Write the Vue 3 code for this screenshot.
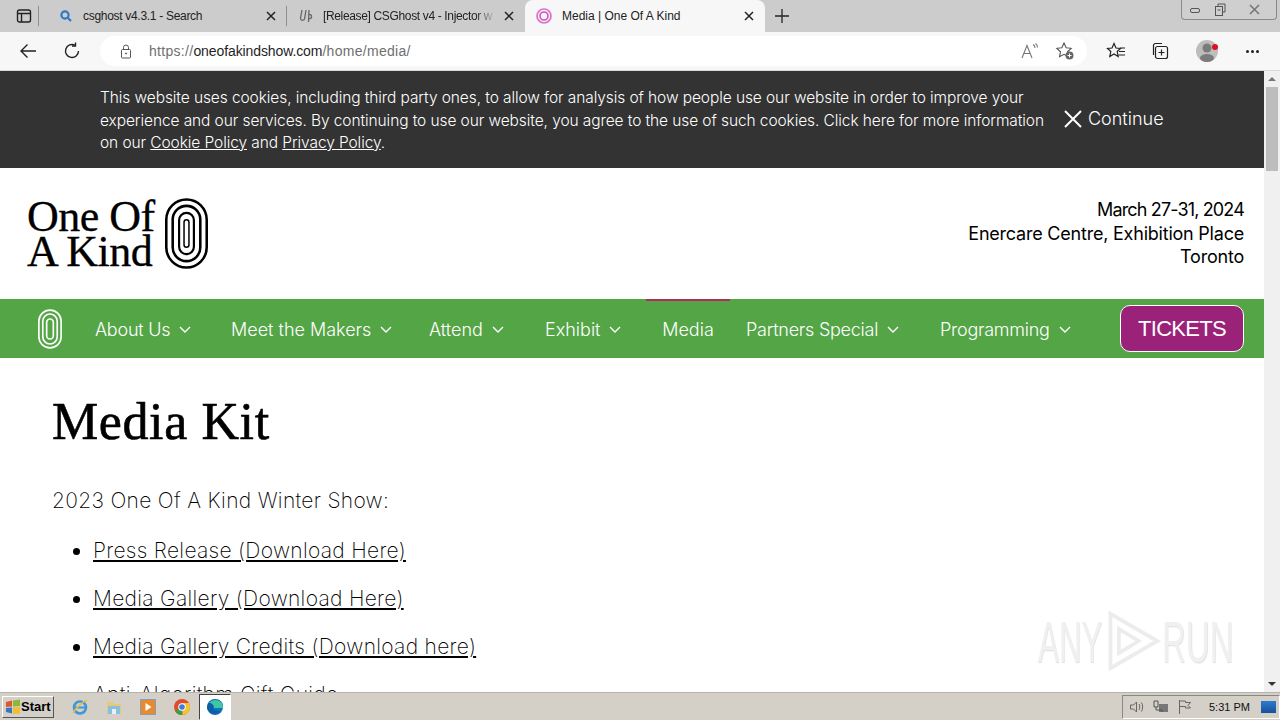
<script setup>
const tabs = [
  { id: 's', title: 'csghost v4.3.1 - Search', icon: 'search' },
  { id: 'r', title: '[Release] CSGhost v4 - Injector w', icon: 'uc' },
  { id: 'm', title: 'Media | One Of A Kind', icon: 'ring', active: true }
]
const nav = [
  { t: 'About Us', c: true, w: 136, tight: true },
  { t: 'Meet the Makers', c: true, w: 198 },
  { t: 'Attend', c: true, w: 116 },
  { t: 'Exhibit', c: true, w: 117 },
  { t: 'Media', c: false, w: 84, active: true },
  { t: 'Partners Special', c: true, w: 194, tight: true },
  { t: 'Programming', c: true, w: 161, tight: true }
]
const links = ['Press Release (Download Here)', 'Media Gallery (Download Here)', 'Media Gallery Credits (Download here)', 'Anti-Algorithm Gift Guide']
</script>

<template>
  <div class="screen">
    <div class="tabstrip">
      <div class="winbtn">
        <svg width="16" height="16" viewBox="0 0 16 16" fill="none" stroke="#222" stroke-width="1.4"><rect x="1.5" y="2" width="13" height="12" rx="2"/><path d="M1.5 5.5h13M5.5 5.5V14" /></svg>
      </div>
      <div class="sep first"></div>
      <div v-for="t in tabs" :key="t.id" class="tab" :class="{ active: t.active, ['tab-' + t.id]: true }">
        <svg v-if="t.icon === 'search'" class="favicon" width="16" height="16" viewBox="0 0 16 16" fill="none"><circle cx="7" cy="7" r="3.6" stroke="#2f78c4" stroke-width="2.2"/><path d="M10 10l3 3" stroke="#2f78c4" stroke-width="2.2"/></svg>
        <svg v-else-if="t.icon === 'uc'" class="favicon" width="16" height="16" viewBox="0 0 16 16" fill="none" stroke="#666" stroke-width="1.3"><path d="M4 2L2.500 10c0 3 3 3 4 1L8 2M11 2l-.5 12M10.500 7c2-1 3.500 0 3 2s-2 2-3 1"/></svg>
        <svg v-else class="favicon" width="18" height="18" viewBox="0 0 18 18" fill="none"><circle cx="9" cy="9" r="7" stroke="#df6fd0" stroke-width="1.700"/><circle cx="9" cy="9" r="4" stroke="#d44fc0" stroke-width="1.600"/></svg>
        <span class="tabtitle">{{ t.title }}</span>
        <svg class="tabx" width="10" height="10" viewBox="0 0 10 10" stroke="#222" stroke-width="1.500"><path d="M1 1l8 8M9 1l-8 8"/></svg>
        <div v-if="t.id === 's'" class="sep"></div>
      </div>
      <svg class="plus" width="16" height="16" viewBox="0 0 16 16" stroke="#222" stroke-width="1.300"><path d="M8 1v14M1 8h14"/></svg>
      <div class="grow"></div>
      <div class="wincontrols">
        <div class="wc"><svg width="12" height="8" viewBox="0 0 12 8" fill="none" stroke="#555"><rect x="1.500" y="2.500" width="9" height="4" rx="1.500"/></svg></div>
        <div class="wc"><svg width="12" height="13" viewBox="0 0 12 13" fill="none" stroke="#555"><rect x="1.500" y="3.500" width="7" height="9"/><path d="M4 3V1h7v8H9"/><path d="M3.500 7h3"/></svg></div>
        <div class="wc wide"><svg width="13" height="11" viewBox="0 0 13 11" stroke="#777" stroke-width="1.600"><path d="M2 1l9 9M11 1l-9 9"/></svg></div>
      </div>
    </div>

    <div class="toolbar">
      <svg class="back" width="18" height="16" viewBox="0 0 18 16" fill="none" stroke="#222" stroke-width="1.400"><path d="M17 8H2M8.500 1.500L2 8l6.500 6.500"/></svg>
      <svg class="reload" width="18" height="18" viewBox="0 0 18 18" fill="none" stroke="#222" stroke-width="1.400"><path d="M15.500 9A6.500 6.500 0 1 1 12 3.200"/><path d="M12.500 .5V4H9"/></svg>
      <div class="omnibox">
        <svg class="lock" width="12" height="15" viewBox="0 0 12 15" fill="none" stroke="#555"><rect x="1.500" y="5.500" width="9" height="8.500" rx="1"/><path d="M3.500 5.500V3.500a2.500 2.500 0 0 1 5 0v2"/><circle cx="6" cy="9.500" r=".6" fill="#555"/></svg>
        <div class="url"><span class="dim">https://</span><span class="host">oneofakindshow.com</span><span class="dim">/home/media/</span></div>
        <div class="grow"></div>
        <svg class="omni-a" width="18" height="16" viewBox="0 0 18 16" fill="none" stroke="#777" stroke-width="1.100"><path d="M1 15L6 2.500 11 15M3 10.500h6"/><path d="M12 1.500c1.500.8 2 2 2 3.500M14.500.5c1.500 1.200 2 2.500 2 4"/></svg>
        <svg class="omni-fav" width="20" height="20" viewBox="0 0 20 20" fill="none"><path d="M9 2l2.200 4.700 5 .6-3.700 3.500 1 5L9 13.300l-4.500 2.500 1-5L1.800 7.300l5-.6z" stroke="#555" stroke-width="1.100"/><circle cx="14.500" cy="14.500" r="4" fill="#666"/><path d="M14.500 12.500v4M12.500 14.500h4" stroke="#fff"/></svg>
      </div>
      <svg class="tb-fav" width="20" height="18" viewBox="0 0 20 18" fill="none" stroke="#222" stroke-width="1.200"><path d="M8 1.500l2 4.500 4.500.5-3.300 3 1 5L8 12l-4.200 2.500 1-5-3.300-3L6 6z"/><path d="M14 6h5M13 9.500h6M12.500 13H19"/></svg>
      <svg class="tb-col" width="18" height="18" viewBox="0 0 18 18" fill="none" stroke="#222" stroke-width="1.200"><rect x="4.500" y="4.500" width="12" height="12" rx="2"/><path d="M2.500 13V3.500a2 2 0 0 1 2-2H11M10.500 7.500v6M7.500 10.500h6"/></svg>
      <div class="avatar">
        <svg width="24" height="24" viewBox="0 0 24 24"><circle cx="11" cy="12" r="11" fill="#bdbdbd"/><circle cx="11" cy="9" r="4.500" fill="#7b7b7b"/><ellipse cx="11" cy="19" rx="7" ry="4" fill="#7b7b7b"/><circle cx="19" cy="8" r="3" fill="#e01020"/></svg>
      </div>
      <div class="dots"><i></i><i></i><i></i></div>
    </div>

    <div class="viewport">
      <div class="page">
        <div class="cookie">
          <p class="cookietext">This website uses cookies, including third party ones, to allow for analysis of how people use our website in order to improve your experience and our services. By continuing to use our website, you agree to the use of such cookies. Click here for more information on our <u>Cookie Policy</u> and <u>Privacy Policy</u>.</p>
          <div class="continue">
            <svg width="20" height="20" viewBox="0 0 20 20" stroke="#fff" stroke-width="2"><path d="M2 2l16 16M18 2L2 18"/></svg>
            <span>Continue</span>
          </div>
        </div>

        <header class="brand">
          <div class="logo">
            <div class="logotext">One Of<br />A Kind</div>
            <svg width="45" height="71" viewBox="0 0 44 72" fill="none" stroke="#000"><rect x="1.500" y="1.500" width="41" height="69" rx="20.500" stroke-width="2.600"/><rect x="8" y="8" width="28" height="56" rx="14" stroke-width="2.600"/><rect x="14.500" y="15" width="15" height="42" rx="7.500" stroke-width="2.200"/><rect x="19.500" y="22" width="5" height="28" rx="2.500" stroke-width="1.500"/></svg>
          </div>
          <div class="eventinfo"><span class="date">March 27-31, 2024</span><br />Enercare Centre, Exhibition Place<br />Toronto</div>
        </header>

        <nav class="nav">
          <svg class="navlogo" width="26" height="40" viewBox="0 0 44 72" fill="none" stroke="#fff"><rect x="2" y="2" width="40" height="68" rx="20" stroke-width="3"/><rect x="9" y="9" width="26" height="54" rx="13" stroke-width="3"/><rect x="16" y="18" width="12" height="36" rx="6" stroke-width="3"/></svg>
          <div v-for="n in nav" :key="n.t" class="navitem" :class="{ active: n.active, tight: n.tight }" :style="{ width: n.w + 'px' }">
            <span>{{ n.t }}</span>
            <svg v-if="n.c" width="12" height="8" viewBox="0 0 12 8" fill="none" stroke="#fff" stroke-width="1.400"><path d="M1 1l5 5 5-5"/></svg>
          </div>
          <div class="grow"></div>
          <div class="tickets">TICKETS</div>
        </nav>

        <main class="content">
          <h1>Media Kit</h1>
          <p class="intro">2023 One Of A Kind Winter Show:</p>
          <ul>
            <li v-for="l in links" :key="l"><u>{{ l }}</u></li>
          </ul>
        </main>

        <div class="watermark">
          <span>ANY</span>
          <svg width="58" height="62" viewBox="0 0 60 66" fill="none" stroke="#ececec" stroke-width="4"><path d="M6 4v58L56 33zM15 20v26l21-13z"/></svg>
          <span class="run">RUN</span>
        </div>
      </div>
      <div class="scrollbar">
        <div class="sb-arrow"><b class="up"></b></div>
        <div class="sb-thumb"></div>
        <div class="grow"></div>
        <div class="sb-arrow"><b class="down"></b></div>
      </div>
    </div>

    <footer class="taskbar">
      <div class="start">
        <svg width="16" height="16" viewBox="0 0 16 16"><path d="M1 3l6-1.500v6L1 8z" fill="#e0582a"/><path d="M8 1.500l7-1v6.500l-7 .5z" fill="#8ab83a"/><path d="M1 9l6-.5v6L1 13z" fill="#2f78c4"/><path d="M8 8.500l7-.5v6.500L8 15z" fill="#f2bd2e"/></svg>
        <span>Start</span>
      </div>
      <div class="apps">
        <div class="app"><svg width="18" height="18" viewBox="0 0 18 18" fill="none"><circle cx="9" cy="9.500" r="6" stroke="#3d97d8" stroke-width="2.600"/><path d="M3 9.500h12" stroke="#3d97d8" stroke-width="2"/><path d="M2 15C5 10 11 4 16 2" stroke="#e8c040" stroke-width="1.400"/></svg></div>
        <div class="app"><svg width="18" height="18" viewBox="0 0 18 18"><path d="M2 4h6l1 2h7v10H2z" fill="#e8c97a"/><rect x="3" y="8" width="12" height="8" fill="#8ac0dc"/><rect x="7" y="11" width="4" height="5" fill="#e8f2f6"/></svg></div>
        <div class="app"><svg width="18" height="18" viewBox="0 0 18 18"><rect x="1.500" y="1.500" width="15" height="15" fill="#e98a2c" stroke="#7fa0c0"/><path d="M6.500 5l6 4-6 4z" fill="#fff"/></svg></div>
        <div class="app"><svg width="18" height="18" viewBox="0 0 18 18"><circle cx="9" cy="9" r="8" fill="#e2492f"/><path d="M9 9L2 13a8 8 0 0 0 7.500 4z" fill="#3f9d48"/><path d="M9 5h7a8 8 0 0 1-6.500 12z" fill="#f4c430"/><circle cx="9" cy="9" r="3.800" fill="#fff"/><circle cx="9" cy="9" r="2.800" fill="#3a7de0"/></svg></div>
        <div class="app current"><svg width="18" height="18" viewBox="0 0 18 18"><circle cx="9" cy="9" r="8" fill="#1173bd"/><path d="M1 9C2 3 8 0 13 2c3 1.200 4 4 4 7H7c0 3 3 5 8 3.500-2 3-5.500 4-8.500 3C3 14.500 1 12 1 9z" fill="#0d5ea8"/><path d="M3 5c3-4 10-4 13 0 1 2 1 4 1 5H8c0-3-2-5-5-5z" fill="#3ec7a2"/></svg></div>
      </div>
      <div class="grow"></div>
      <div class="tray">
        <svg width="16" height="16" viewBox="0 0 16 16" fill="none" stroke="#666"><path d="M1.500 6v4h3l3 3V3l-3 3z"/><path d="M10 5c1 2 1 4 0 6M12.500 3.500c1.500 3 1.500 6 0 9"/></svg>
        <svg width="16" height="16" viewBox="0 0 16 16" fill="none"><rect x="6" y="5" width="9" height="8" fill="#777"/><path d="M1 2h4v6H1zM3 8v3h6v2" stroke="#555"/></svg>
        <svg width="16" height="16" viewBox="0 0 16 16" fill="none" stroke="#666"><path d="M2.500 1v14M2.500 2h6v1.500h5L11 6.500l2.500 2.500h-5V7.500h-6"/></svg>
        <span class="clock">5:31 PM</span>
        <div class="showdesk"></div>
      </div>
    </footer>
  </div>
</template>

<style scoped>
.screen { width: 1280px; height: 720px; display: flex; flex-direction: column; overflow: hidden; font-family: "Liberation Sans", Arial, sans-serif; background: #fff; }
.grow { flex: 1; }

.tabstrip { height: 32px; background: #cccccc; display: flex; align-items: stretch; flex: none; }
.winbtn { width: 38px; display: flex; align-items: center; justify-content: center; padding-left: 10px; box-sizing: border-box; flex: none; }
.sep { width: 1px; height: 20px; background: #8f8f8f; align-self: center; flex: none; }
.sep.first { margin: 0 8px 0 0; }
.tab { position: relative; display: flex; align-items: center; box-sizing: border-box; font-size: 12px; color: #222; flex: none; }
.tab-s { width: 240px; padding-left: 11px; }
.tab-s .sep { position: absolute; right: 0; top: 6px; }
.tab-s .tabtitle { letter-spacing: -.3px; }
.tab-r { width: 238px; padding-left: 11px; }
.tab-r .tabtitle { letter-spacing: -.35px; mask-image: linear-gradient(to right, #000 88%, transparent); }
.tab-m { width: 240px; padding-left: 10px; }
.tab.active { background: #f7f7f7; border-radius: 8px 8px 0 0; height: 32px; }
.favicon { flex: none; margin-right: 9px; }
.tabtitle { flex: 1; white-space: nowrap; overflow: hidden; min-width: 0; }
.tabx { flex: none; margin: 0 11px 0 8px; }
.plus { align-self: center; margin-left: 9px; flex: none; }
.wincontrols { display: flex; height: 19px; border: 1px solid #8a8a8a; border-top: none; border-radius: 0 0 4px 4px; margin-right: 3px; background: #cfcfcf; flex: none; }
.wc { width: 25px; display: flex; align-items: center; justify-content: center; }
.wc.wide { width: 44px; }

.toolbar { height: 39px; background: #f7f7f7; display: flex; align-items: center; flex: none; border-bottom: 1px solid #d8d8d8; box-sizing: border-box; }
.back { margin-left: 19px; flex: none; }
.reload { margin-left: 26px; flex: none; }
.omnibox { width: 987px; height: 30px; margin-left: 19px; background: #fff; border-radius: 15px; display: flex; align-items: center; flex: none; box-sizing: border-box; }
.lock { margin-left: 20px; flex: none; }
.url { margin-left: 17px; font-size: 14px; white-space: nowrap; }
.dim { color: #6f6f6f; letter-spacing: .3px; }
.host { color: #1f1f1f; letter-spacing: -.1px; }
.omni-a { margin-right: 16px; flex: none; }
.omni-fav { margin-right: 12px; flex: none; }
.tb-fav { margin-left: 19px; flex: none; }
.tb-col { margin-left: 25px; flex: none; }
.avatar { margin-left: 27px; width: 24px; height: 24px; flex: none; }
.dots { margin-left: 26px; display: flex; gap: 2px; flex: none; }
.dots i { width: 3px; height: 3px; border-radius: 50%; background: #222; display: block; }

.viewport { flex: 1; display: flex; min-height: 0; }
.page { flex: 1; position: relative; overflow: hidden; min-width: 0; font-family: Inter, "Liberation Sans", sans-serif; }

.cookie { height: 97px; background: #333333; color: #fff; display: flex; box-sizing: border-box; padding: 16px 0 0 100px; }
.cookietext { width: 950px; margin: 0; font-size: 15.500px; line-height: 22.500px; font-weight: 300; letter-spacing: -.09px; }
.continue { display: flex; align-items: center; gap: 5px; margin: 4px 0 0 13px; font-size: 18px; font-weight: 300; height: 55px; align-self: flex-start; }

.brand { height: 131px; display: flex; align-items: center; justify-content: space-between; padding: 0 20px 0 27px; box-sizing: border-box; }
.logo { display: flex; align-items: center; gap: 9px; }
.logotext { font-family: "Liberation Serif", serif; font-size: 44px; line-height: 35px; color: #000; letter-spacing: -0.500px; -webkit-text-stroke: .3px #000; }
.eventinfo { text-align: right; font-size: 18px; line-height: 23.400px; color: #000; font-weight: 400; letter-spacing: -.22px; }
.date { letter-spacing: -.85px; }

.nav { height: 59px; background: #54a546; display: flex; align-items: stretch; color: #fff; padding-right: 20px; box-sizing: border-box; }
.navlogo { flex: none; align-self: center; margin: 0 32px 0 37px; }
.navitem { display: flex; align-items: center; gap: 9px; font-size: 18px; font-weight: 300; flex: none; box-sizing: border-box; white-space: nowrap; padding-top: 2px; }
.navitem.tight span { letter-spacing: -.25px; }
.navitem.active { border-top: 2px solid #b52a5e; margin-left: -16px; justify-content: center; padding-top: 0; margin-right: 16px; }
.tickets { align-self: center; width: 124px; height: 47px; box-sizing: border-box; background: #9b2279; border: 1px solid #fff; border-radius: 10px; display: flex; align-items: center; justify-content: center; font-family: "Liberation Sans", sans-serif; font-size: 22px; letter-spacing: -.7px; color: #fff; }

.content { padding: 0 52px; color: #000; }
h1 { margin: 0; padding-top: 34px; font-family: "Liberation Serif", serif; font-weight: 400; font-size: 52px; line-height: 60px; color: #000; letter-spacing: .6px; -webkit-text-stroke: .6px #000; }
.intro { margin: 33px 0 0; font-size: 21px; line-height: 32px; font-weight: 250; letter-spacing: .3px; }
ul { margin: 18px 0 0; padding-left: 41px; }
li { font-size: 21px; line-height: 32px; font-weight: 250; margin-bottom: 16px; letter-spacing: .3px; }

.watermark { position: absolute; left: 1038px; top: 539px; display: flex; align-items: center; font-family: "Liberation Sans", sans-serif; font-size: 58px; color: #f0f0f0; height: 62px; text-shadow: 1px 1px 1px #dedede; }
.watermark span { display: block; width: 66px; transform: scaleX(.54); transform-origin: left center; white-space: nowrap; }
.watermark .run { transform: scaleX(.57); }

.scrollbar { width: 16px; background: #f0f0f0; display: flex; flex-direction: column; align-items: center; flex: none; }
.sb-arrow { height: 16px; display: flex; align-items: center; justify-content: center; }
.up { width: 0; height: 0; border: 4px solid transparent; border-top: none; border-bottom: 4px solid #777; display: block; }
.down { width: 0; height: 0; border: 4px solid transparent; border-bottom: none; border-top: 4px solid #333; display: block; }
.sb-thumb { width: 12px; height: 84px; background: #bdbdbd; }

.taskbar { height: 28px; flex: none; background: #d4d0c8; border-top: 1px solid #b8b4ac; box-sizing: border-box; display: flex; align-items: center; font-family: "Liberation Sans", sans-serif; }
.start { margin-left: 2px; width: 52px; height: 22px; box-sizing: border-box; display: flex; align-items: center; gap: 0; padding-left: 2px; background: #d4d0c8; border: 1px solid; border-color: #fff #555 #555 #fff; font-size: 13px; font-weight: 700; color: #000; flex: none; }
.apps { display: flex; margin-left: 9px; align-items: center; }
.app { width: 34px; height: 26px; display: flex; align-items: center; justify-content: center; flex: none; }
.app.current { width: 32px; background: #fff; border: 1px solid; border-color: #444 #fff #fff #444; box-sizing: border-box; }
.tray { height: 24px; width: 158px; box-sizing: border-box; border: 1px solid; border-color: #888 #fff #fff #888; display: flex; align-items: center; padding-left: 6px; gap: 8px; font-size: 11px; color: #111; flex: none; }
.clock { margin-left: 8px; white-space: nowrap; }
.showdesk { width: 15px; height: 12px; background: linear-gradient(#2c7cd0, #1b4f9a); margin-left: 3px; flex: none; }
</style>
